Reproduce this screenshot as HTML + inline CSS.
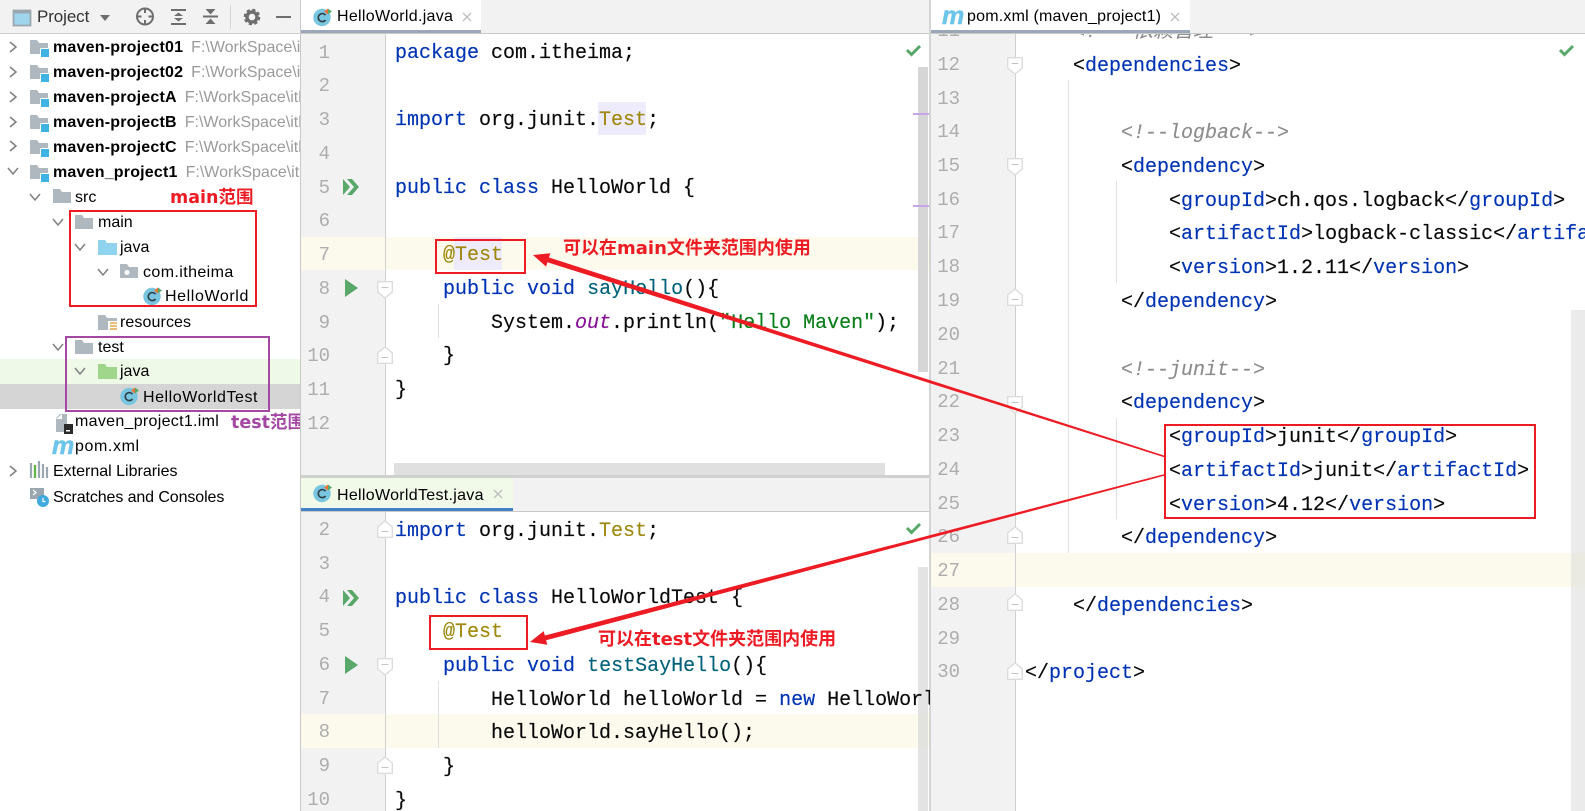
<!DOCTYPE html>
<html><head><meta charset="utf-8"><title>IDE</title>
<style>
html,body{margin:0;padding:0;background:#fff}
#r{position:relative;width:1585px;height:811px;overflow:hidden;background:#fff;font-family:"Liberation Sans","Noto Sans CJK SC",sans-serif}
.b{position:absolute}
.p{position:absolute;left:0;top:0;width:1585px;height:811px}
.l{position:absolute;white-space:pre;font:20px/34px "Liberation Mono","Noto Sans CJK SC",monospace;color:#080808;-webkit-text-stroke:.15px currentColor}
#u .l{margin-top:1px}#d .l,#e .l{margin-top:2px}
#s .t{margin-top:1px}
.x{left:395px}.y{left:1025px}
.n{position:absolute;white-space:pre;font:19px/34px "Liberation Mono",monospace;color:#adadad;text-align:right;width:29px}
.n1{left:301px}.n2{left:931px}
k{color:#0033b3}m{color:#00627a}i{color:#871094;font-style:italic}s{color:#067d17;text-decoration:none}
u{color:#9e880d;text-decoration:none}c{color:#8c8c8c;font-style:italic}
.t{position:absolute;white-space:pre;font-size:16px;line-height:24px;color:#000}
.t b{font-weight:700;letter-spacing:.2px}
.t em{font-style:normal;color:#9a9a9a;margin-left:8px}
.tab{position:absolute;white-space:pre;font-size:16px;line-height:24px;color:#000;letter-spacing:.3px}
.an{position:absolute;white-space:pre;font:700 18px/24px "DejaVu Sans","Noto Sans CJK SC",sans-serif}
.logo{position:absolute;font:italic 700 25px/24px "Liberation Sans",sans-serif;color:#6cc4ea;-webkit-text-stroke:.5px #6cc4ea}
</style></head><body><div id="r">

<!-- left panel -->
<div class="b" style="left:0;top:0;width:300px;height:33px;background:#f2f2f2"></div>
<div class="b" style="left:0;top:33px;width:300px;height:1px;background:#cfcfcf"></div>
<div class="b" style="left:0;top:359px;width:300px;height:25px;background:#eff9e7"></div>
<div class="b" style="left:0;top:384px;width:300px;height:25px;background:#d5d5d5"></div>
<div class="b" style="left:37px;top:5px;font-size:17px;line-height:24px;color:#333;letter-spacing:-.1px">Project</div>

<div class="p" id="s" style="clip-path:inset(0 1285px 0 0)">
<div class="t" style="left:53px;top:35px"><b>maven-project01</b><em>F:\WorkSpace\itheima</em></div>
<div class="t" style="left:53px;top:60px"><b>maven-project02</b><em>F:\WorkSpace\itheima</em></div>
<div class="t" style="left:53px;top:85px"><b>maven-projectA</b><em>F:\WorkSpace\itheima</em></div>
<div class="t" style="left:53px;top:110px"><b>maven-projectB</b><em>F:\WorkSpace\itheima</em></div>
<div class="t" style="left:53px;top:135px"><b>maven-projectC</b><em>F:\WorkSpace\itheima</em></div>
<div class="t" style="left:53px;top:160px"><b>maven_project1</b><em>F:\WorkSpace\itheima</em></div>
<div class="t" style="left:75px;top:185px">src</div>
<div class="t" style="left:98px;top:210px">main</div>
<div class="t" style="left:120px;top:235px">java</div>
<div class="t" style="left:143px;top:260px;letter-spacing:.4px">com.itheima</div>
<div class="t" style="left:165px;top:284px;letter-spacing:.6px">HelloWorld</div>
<div class="t" style="left:120px;top:310px;letter-spacing:.1px">resources</div>
<div class="t" style="left:98px;top:335px">test</div>
<div class="t" style="left:120px;top:359px">java</div>
<div class="t" style="left:143px;top:385px;letter-spacing:.55px">HelloWorldTest</div>
<div class="t" style="left:75px;top:409px;letter-spacing:.3px">maven_project1.iml</div>
<div class="t" style="left:75px;top:434px;letter-spacing:.6px">pom.xml</div>
<div class="t" style="left:53px;top:459px">External Libraries</div>
<div class="t" style="left:53px;top:485px;letter-spacing:-.1px">Scratches and Consoles</div>
<div class="an" style="left:170px;top:186px;color:#ed1c24;font-size:17.5px">main范围</div>
<div class="an" style="left:231px;top:411px;color:#a349a4;font-size:17.5px">test范围</div>
</div>
<div class="logo" style="left:52px;top:434px">m</div>
<div class="b" style="left:300px;top:0;width:1px;height:811px;background:#c9c9c9"></div>

<!-- upper editor -->
<div class="b" style="left:301px;top:33px;width:84px;height:442px;background:#f2f2f2"></div>
<div class="b" style="left:301px;top:237px;width:628px;height:33px;background:#fcfaed"></div>
<div class="b" style="left:385px;top:33px;width:1px;height:442px;background:#d0d0d0"></div>
<div class="b" style="left:598px;top:102px;width:48px;height:33px;background:#edebfc"></div>
<div class="b" style="left:454px;top:237px;width:48px;height:33px;background:#edebfc"></div>
<div class="b" style="left:438px;top:304px;width:1px;height:34px;background:#e0e0e0"></div>
<div class="b" style="left:918px;top:67px;width:10px;height:305px;background:#d6d6d6"></div>
<div class="b" style="left:913px;top:113px;width:16px;height:2px;background:#c8a5e8"></div>
<div class="b" style="left:913px;top:205px;width:16px;height:2px;background:#c8a5e8"></div>
<div class="b" style="left:394px;top:463px;width:491px;height:12px;background:#e0e0e0"></div>

<div class="p" id="u" style="clip-path:inset(33px 656px 336px 301px)">
<div class="n n1" style="top:36px">1</div><div class="n n1" style="top:69px">2</div><div class="n n1" style="top:103px">3</div><div class="n n1" style="top:137px">4</div><div class="n n1" style="top:171px">5</div><div class="n n1" style="top:204px">6</div><div class="n n1" style="top:238px">7</div><div class="n n1" style="top:272px">8</div><div class="n n1" style="top:306px">9</div><div class="n n1" style="top:339px">10</div><div class="n n1" style="top:373px">11</div><div class="n n1" style="top:407px">12</div>
<div class="l x" style="top:36px"><k>package</k> com.itheima;</div>
<div class="l x" style="top:103px"><k>import</k> org.junit.<u>Test</u>;</div>
<div class="l x" style="top:171px"><k>public class</k> HelloWorld {</div>
<div class="l x" style="top:238px">    <u>@Test</u></div>
<div class="l x" style="top:272px">    <k>public void</k> <m>sayHello</m>(){</div>
<div class="l x" style="top:306px">        System.<i>out</i>.println(<s>"Hello Maven"</s>);</div>
<div class="l x" style="top:339px">    }</div>
<div class="l x" style="top:373px">}</div>
</div>

<!-- divider between lower & upper -->
<div class="b" style="left:301px;top:475px;width:628px;height:3px;background:#d0d0d0"></div>
<div class="b" style="left:929px;top:0;width:2px;height:811px;background:#d4d4d4"></div>

<!-- top tab bars -->
<div class="b" style="left:301px;top:0;width:628px;height:33px;background:#f2f2f2"></div>
<div class="b" style="left:301px;top:33px;width:628px;height:1px;background:#c9c9c9"></div>
<div class="b" style="left:301px;top:0;width:180px;height:30px;background:#fff"></div>
<div class="b" style="left:301px;top:30px;width:180px;height:3px;background:#9ba7b8"></div>
<div class="tab" style="left:337px;top:5px">HelloWorld.java</div>

<!-- lower editor -->
<div class="b" style="left:301px;top:478px;width:628px;height:33px;background:#f2f2f2"></div>
<div class="b" style="left:301px;top:511px;width:628px;height:1px;background:#c9c9c9"></div>
<div class="b" style="left:301px;top:478px;width:212px;height:30px;background:#f1f9e9"></div>
<div class="b" style="left:301px;top:508px;width:212px;height:3px;background:#4083c9"></div>
<div class="tab" style="left:337px;top:484px">HelloWorldTest.java</div>
<div class="b" style="left:301px;top:512px;width:84px;height:299px;background:#f2f2f2"></div>
<div class="b" style="left:301px;top:714px;width:628px;height:34px;background:#fcfaed"></div>
<div class="b" style="left:385px;top:512px;width:1px;height:299px;background:#d0d0d0"></div>
<div class="b" style="left:438px;top:681px;width:1px;height:67px;background:#e0e0e0"></div>
<div class="b" style="left:918px;top:567px;width:10px;height:244px;background:#d9d9d9;opacity:.75"></div>
<div class="p" id="d" style="clip-path:inset(512px 655px 0 301px)">
<div class="n n1" style="top:513px">2</div><div class="n n1" style="top:547px">3</div><div class="n n1" style="top:580px">4</div><div class="n n1" style="top:614px">5</div><div class="n n1" style="top:648px">6</div><div class="n n1" style="top:682px">7</div><div class="n n1" style="top:715px">8</div><div class="n n1" style="top:749px">9</div><div class="n n1" style="top:783px">10</div>
<div class="l x" style="top:513px"><k>import</k> org.junit.<u>Test</u>;</div>
<div class="l x" style="top:580px"><k>public class</k> HelloWorldTest {</div>
<div class="l x" style="top:614px">    <u>@Test</u></div>
<div class="l x" style="top:648px">    <k>public void</k> <m>testSayHello</m>(){</div>
<div class="l x" style="top:682px">        HelloWorld helloWorld = <k>new</k> HelloWorld();</div>
<div class="l x" style="top:715px">        helloWorld.sayHello();</div>
<div class="l x" style="top:749px">    }</div>
<div class="l x" style="top:783px">}</div>
</div>

<!-- right editor -->
<div class="b" style="left:931px;top:33px;width:84px;height:778px;background:#f2f2f2"></div>
<div class="b" style="left:931px;top:553px;width:654px;height:34px;background:#fcfaed"></div>
<div class="b" style="left:1015px;top:33px;width:1px;height:778px;background:#d0d0d0"></div>
<div class="b" style="left:1068px;top:80px;width:1px;height:473px;background:#e0e0e0"></div>
<div class="b" style="left:1116px;top:181px;width:1px;height:102px;background:#e0e0e0"></div>
<div class="b" style="left:1116px;top:418px;width:1px;height:101px;background:#e0e0e0"></div>
<div class="b" style="left:1571px;top:310px;width:14px;height:501px;background:rgba(215,215,215,.5)"></div>
<div class="p" id="e" style="clip-path:inset(33px 0 0 931px)">
<div class="n n2" style="top:14px">11</div><div class="n n2" style="top:48px">12</div><div class="n n2" style="top:82px">13</div><div class="n n2" style="top:115px">14</div><div class="n n2" style="top:149px">15</div><div class="n n2" style="top:183px">16</div><div class="n n2" style="top:216px">17</div><div class="n n2" style="top:250px">18</div><div class="n n2" style="top:284px">19</div><div class="n n2" style="top:318px">20</div><div class="n n2" style="top:352px">21</div><div class="n n2" style="top:385px">22</div><div class="n n2" style="top:419px">23</div><div class="n n2" style="top:453px">24</div><div class="n n2" style="top:487px">25</div><div class="n n2" style="top:520px">26</div><div class="n n2" style="top:554px">27</div><div class="n n2" style="top:588px">28</div><div class="n n2" style="top:622px">29</div><div class="n n2" style="top:655px">30</div>
<div class="l y" style="top:14px">    <c>&lt;!-- 依赖管理 --&gt;</c></div>
<div class="l y" style="top:48px">    &lt;<k>dependencies</k>&gt;</div>
<div class="l y" style="top:115px">        <c>&lt;!--logback--&gt;</c></div>
<div class="l y" style="top:149px">        &lt;<k>dependency</k>&gt;</div>
<div class="l y" style="top:183px">            &lt;<k>groupId</k>&gt;ch.qos.logback&lt;/<k>groupId</k>&gt;</div>
<div class="l y" style="top:216px">            &lt;<k>artifactId</k>&gt;logback-classic&lt;/<k>artifactId</k>&gt;</div>
<div class="l y" style="top:250px">            &lt;<k>version</k>&gt;1.2.11&lt;/<k>version</k>&gt;</div>
<div class="l y" style="top:284px">        &lt;/<k>dependency</k>&gt;</div>
<div class="l y" style="top:352px">        <c>&lt;!--junit--&gt;</c></div>
<div class="l y" style="top:385px">        &lt;<k>dependency</k>&gt;</div>
<div class="l y" style="top:419px">            &lt;<k>groupId</k>&gt;junit&lt;/<k>groupId</k>&gt;</div>
<div class="l y" style="top:453px">            &lt;<k>artifactId</k>&gt;junit&lt;/<k>artifactId</k>&gt;</div>
<div class="l y" style="top:487px">            &lt;<k>version</k>&gt;4.12&lt;/<k>version</k>&gt;</div>
<div class="l y" style="top:520px">        &lt;/<k>dependency</k>&gt;</div>
<div class="l y" style="top:588px">    &lt;/<k>dependencies</k>&gt;</div>
<div class="l y" style="top:655px">&lt;/<k>project</k>&gt;</div>
</div>
<div class="b" style="left:931px;top:0;width:654px;height:33px;background:#f2f2f2"></div>
<div class="b" style="left:931px;top:33px;width:654px;height:1px;background:#c9c9c9"></div>
<div class="b" style="left:931px;top:0;width:259px;height:30px;background:#fff"></div>
<div class="b" style="left:931px;top:30px;width:259px;height:3px;background:#9ba7b8"></div>
<div class="tab" style="left:967px;top:5px;letter-spacing:.2px">pom.xml (maven_project1)</div>
<div class="logo" style="left:942px;top:4px">m</div>

<!-- annotations -->
<div class="an" style="left:563px;top:237px;color:#ed1c24">可以在main文件夹范围内使用</div>
<div class="an" style="left:598px;top:628px;color:#ed1c24">可以在test文件夹范围内使用</div>

<svg class="p" width="1585" height="811" viewBox="0 0 1585 811" xmlns="http://www.w3.org/2000/svg">
<defs>
<g id="fo"><path d="M0 1h7l2 3h9v11H0z" fill="#afb8bf"/></g>
<g id="mod"><path d="M0 1h7l2 3h9v11H0z" fill="#afb8bf"/><rect x="10" y="9" width="9" height="9" fill="#fff"/><rect x="11" y="10" width="8" height="8" fill="#3fb4e2"/></g>
<g id="rt"><path d="M-3-5L3 0L-3 5" fill="none" stroke="#7f7f7f" stroke-width="1.5"/></g>
<g id="dn"><path d="M-5-3L0 3L5-3" fill="none" stroke="#7f7f7f" stroke-width="1.5"/></g>
<g id="cl"><circle cx="9" cy="9.500" r="8.700" fill="#78c6e0"/><path d="M12.500 7.200A4 4 0 1 0 12.500 12" fill="none" stroke="#2d3e47" stroke-width="1.600"/><path d="M11 3.500L15 .5V6.500z" fill="#e8743b"/><path d="M15 0.500L19 3.500L15 6.500z" fill="#59a869"/></g>
<g id="fd"><path d="M.7.700H15.300V11L8 17L.7 11z" fill="#fff" stroke="#dcdcdc" stroke-width="1.400"/><path d="M4.500 6.500H11.500" stroke="#c4c4c4" stroke-width="1"/></g>
<g id="fu"><path d="M.7 16.300H15.300V6L8 0L.7 6z" fill="#fff" stroke="#dcdcdc" stroke-width="1.400"/><path d="M4.500 10.500H11.500" stroke="#c4c4c4" stroke-width="1"/></g>
<g id="rr"><path d="M0 0L7 8L0 16zM4 0H9L16 8L9 16H4L11 8z" fill="#59a869"/></g>
<g id="ok"><path d="M0 4L4.500 8.500L13 0" fill="none" stroke="#59a869" stroke-width="3"/></g>
<g id="xx"><path d="M-4-4L4 4M4-4L-4 4" stroke="#bdbdbd" stroke-width="1.300"/></g>
</defs>

<!-- toolbar -->
<rect x="13.500" y="10.500" width="17" height="15" fill="#9fd6ee" stroke="#9aa7b0" stroke-width="1.800"/>
<rect x="13" y="10" width="18" height="3.500" fill="#9aa7b0"/>
<path d="M100 15H110L105 21z" fill="#6e6e6e"/>
<circle cx="145" cy="16.500" r="8" fill="none" stroke="#6e6e6e" stroke-width="2"/>
<path d="M145 8.500V13M145 20V24.500M137 16.500H141.500M148.500 16.500H153" stroke="#6e6e6e" stroke-width="2"/>
<path d="M171 10H186M171 24H186" stroke="#6e6e6e" stroke-width="2"/>
<path d="M178.500 12.500L183 16H174zM178.500 21.500L183 18H174z" fill="#6e6e6e"/>
<path d="M203 16.500H218" stroke="#6e6e6e" stroke-width="2"/>
<path d="M205.500 9H215.500L210.500 14.500zM205.500 24H215.500L210.500 18.500z" fill="#6e6e6e"/>
<path d="M230.500 5V29" stroke="#d4d4d4" stroke-width="1"/>
<circle cx="252" cy="17" r="5" fill="none" stroke="#6e6e6e" stroke-width="3.400"/>
<circle cx="252" cy="17" r="7.200" fill="none" stroke="#6e6e6e" stroke-width="2.200" stroke-dasharray="3.200 2.450"/>
<rect x="276" y="16" width="15" height="2" fill="#6e6e6e"/>

<!-- tree icons -->
<use href="#rt" x="13" y="47"/><use href="#rt" x="13" y="72"/><use href="#rt" x="13" y="97"/><use href="#rt" x="13" y="122"/><use href="#rt" x="13" y="146"/>
<use href="#dn" x="13" y="171"/><use href="#dn" x="35" y="197"/><use href="#dn" x="58" y="222"/><use href="#dn" x="80" y="247"/><use href="#dn" x="103" y="272"/><use href="#dn" x="58" y="347"/><use href="#dn" x="80" y="371"/><use href="#rt" x="13" y="471"/>
<use href="#mod" x="30" y="39"/><use href="#mod" x="30" y="64"/><use href="#mod" x="30" y="89"/><use href="#mod" x="30" y="114"/><use href="#mod" x="30" y="139"/><use href="#mod" x="30" y="164"/>
<use href="#fo" x="53" y="188"/><use href="#fo" x="75" y="214"/>
<path d="M98 240h7l2 3h10v12H98z" fill="#8fd3ee"/>
<path d="M120 264h7l2 3h9v11h-18z" fill="#afb8bf"/><circle cx="127" cy="272.500" r="2.500" fill="#fff"/>
<use href="#cl" x="143" y="287"/>
<path d="M98 315h7l2 3h10v12H98z" fill="#afb8bf"/><rect x="108" y="321" width="10" height="11" fill="#fff"/><path d="M110 323h7M110 326h7M110 329h7" stroke="#e0a84a" stroke-width="1.500"/>
<use href="#fo" x="75" y="339"/>
<path d="M98 364h7l2 3h10v12H98z" fill="#a0d58c"/>
<use href="#cl" x="120" y="387"/>
<path d="M61 414h-1l-4 4v14h11v-18z" fill="#afb8bf"/><path d="M56 419h6v-5" fill="#fff"/><rect x="64" y="424" width="9" height="10" fill="#2b2b2b"/><rect x="66" y="430" width="4" height="1.500" fill="#fff"/>
<path d="M31 463v15M35 465v13M39 461v17M43 464v14M47 467v11" stroke="#9aa7b0" stroke-width="2.200"/><path d="M35 465v13" stroke="#62b543" stroke-width="2.200"/>
<rect x="30" y="488" width="14" height="11" fill="#9aa7b0"/><path d="M33 490l3 2.500-3 2.500" fill="none" stroke="#fff" stroke-width="1.200"/><circle cx="43" cy="501" r="6" fill="#40a9e0"/><path d="M43 498v3.500h2.500" fill="none" stroke="#fff" stroke-width="1.200"/>

<!-- tab icons -->
<use href="#cl" x="313" y="8"/><use href="#xx" x="467" y="17"/>
<use href="#cl" x="313" y="484"/><use href="#xx" x="498" y="494"/>
<use href="#xx" x="1175" y="17"/>

<!-- gutter -->
<use href="#rr" x="343" y="179"/><use href="#rr" x="343" y="590"/>
<path d="M345 279L358 288L345 297zM345 656L358 665L345 674z" fill="#59a869"/>
<use href="#fd" x="377" y="281"/><use href="#fu" x="377" y="347"/><use href="#fu" x="377" y="521"/><use href="#fd" x="377" y="658"/><use href="#fu" x="377" y="757"/>
<use href="#fd" x="1007" y="57"/><use href="#fd" x="1007" y="158"/><use href="#fu" x="1007" y="289"/><use href="#fd" x="1007" y="396"/><use href="#fu" x="1007" y="527"/><use href="#fu" x="1007" y="594"/><use href="#fu" x="1007" y="663"/>
<use href="#ok" x="907" y="46"/><use href="#ok" x="907" y="524"/><use href="#ok" x="1560" y="46"/>

<!-- boxes -->
<g fill="none" stroke-width="2">
<rect x="70" y="211" width="186" height="95" stroke="#ed1c24"/>
<rect x="66" y="337" width="203" height="74" stroke="#a349a4"/>
<rect x="436" y="240" width="89" height="33" stroke="#ed1c24"/>
<rect x="430" y="616" width="97" height="33" stroke="#ed1c24"/>
<rect x="1165" y="425" width="370" height="93" stroke="#ed1c24"/>
</g>
<!-- arrows -->
<polygon points="533,255 550.300,253.200 549,257.500 1166.200,456.200 1165.800,457.800 547.400,262.300 546.100,266.600" fill="#ed1c24"/>
<polygon points="530,642 543.700,631.100 544.900,635.500 1163.800,474.200 1164.200,475.800 546.100,640.300 547.300,644.700" fill="#ed1c24"/>
</svg>
</div></body></html>
